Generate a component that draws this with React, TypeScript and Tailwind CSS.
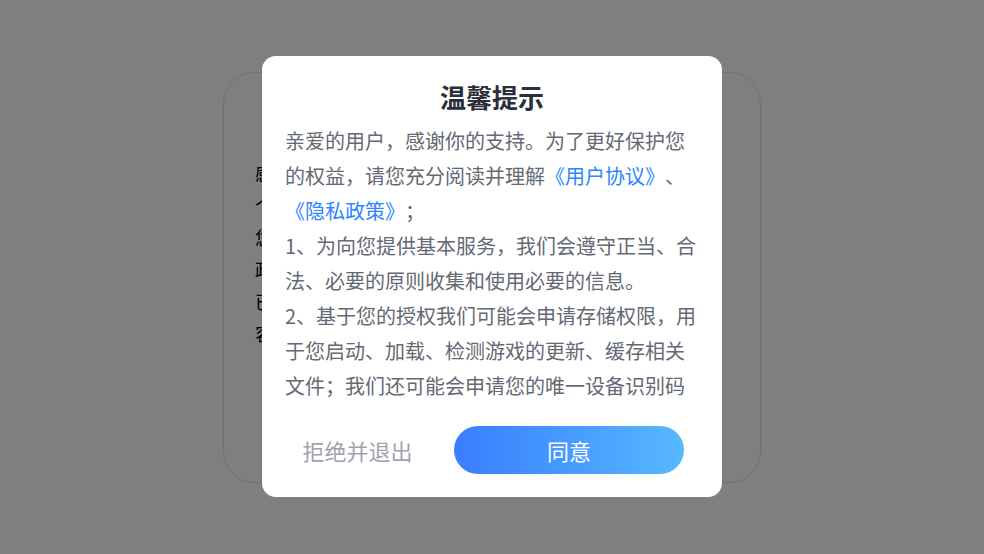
import React from 'react';

const bgLines = [
  '感谢您信任并使用本游戏！我们依据最新的法律法规要求，',
  '个人信息保护的相关规定制定了隐私政策，请您在使用前',
  '您需仔细阅读并充分理解各条款内容，特别是免除或者限',
  '政策中关于收集使用个人信息的范围与方式的说明，以及',
  '已同意的权限可以随时在系统设置中关闭，若您不同意相',
  '容，可能无法正常使用本游戏的全部功能。',
];

export default function App() {
  return (
    <div className="relative w-[984px] h-[554px] overflow-hidden bg-white font-['Noto_Sans_CJK_SC','Noto_Sans',sans-serif] [text-spacing-trim:space-all]">
      {/* page behind */}
      <div className="flex h-full items-center justify-center">
        <div className="w-[538px] h-[411px] rounded-[32px] border border-[#e2e2e2] bg-white pl-[31px] pt-[84px]">
          <div className="w-[478px] overflow-hidden text-[18.4px] leading-[32px] text-black">
            {bgLines.map((line) => (
              <div key={line} className="whitespace-nowrap">
                {line}
              </div>
            ))}
          </div>
        </div>
      </div>

      {/* overlay */}
      <div className="absolute inset-0 flex items-center justify-center bg-black/50">
        <div className="w-[460px] h-[441px] -mt-[1px] rounded-[14px] bg-white px-[23px] pt-[23px] pb-[23px] flex flex-col">
          <h2 className="text-center text-[26px] leading-[36px] font-bold text-[#2b2f3a]">温馨提示</h2>
          <div className="mt-[8px] h-[281px] overflow-hidden text-[20px] leading-[35px] text-[#656974]">
            <p>
              亲爱的用户，感谢你的支持。为了更好保护您的权益，请您充分阅读并理解
              <span className="text-[#2f84ff]">《用户协议》</span>、
              <span className="text-[#2f84ff]">《隐私政策》</span>；
            </p>
            <p>1、为向您提供基本服务，我们会遵守正当、合法、必要的原则收集和使用必要的信息。</p>
            <p>
              2、基于您的授权我们可能会申请存储权限，用于您启动、加载、检测游戏的更新、缓存相关文件；我们还可能会申请您的唯一设备识别码（IMEI、Android ID等），用于识别设备、保障账号安全。
            </p>
          </div>
          <div className="mt-auto flex items-center gap-[24px]">
            <button className="w-[145px] h-[48px] text-center text-[22px] text-[#9fa3ad]">拒绝并退出</button>
            <button className="w-[230px] h-[48px] rounded-full bg-gradient-to-r from-[#3a7dff] to-[#58b8ff] text-[22px] text-white">
              同意
            </button>
          </div>
        </div>
      </div>
    </div>
  );
}
